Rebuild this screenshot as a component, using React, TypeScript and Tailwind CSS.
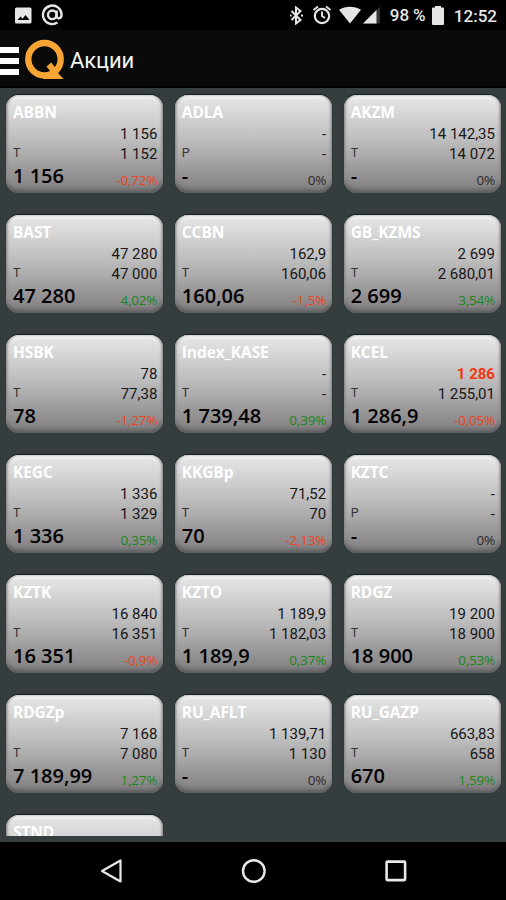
type Quote = {
  name: string;
  first: string;
  second: string;
  mode?: string;
  price: string;
  change: string;
  alert?: boolean;
};

const quotes: Quote[] = [
  { name: 'ABBN', first: '1 156', second: '1 152', price: '1 156', change: '-0,72%' },
  { name: 'ADLA', first: '-', second: '-', mode: 'P', price: '-', change: '0%' },
  { name: 'AKZM', first: '14 142,35', second: '14 072', price: '-', change: '0%' },
  { name: 'BAST', first: '47 280', second: '47 000', price: '47 280', change: '4,02%' },
  { name: 'CCBN', first: '162,9', second: '160,06', price: '160,06', change: '-1,5%' },
  { name: 'GB_KZMS', first: '2 699', second: '2 680,01', price: '2 699', change: '3,54%' },
  { name: 'HSBK', first: '78', second: '77,38', price: '78', change: '-1,27%' },
  { name: 'Index_KASE', first: '-', second: '-', price: '1 739,48', change: '0,39%' },
  { name: 'KCEL', first: '1 286', second: '1 255,01', price: '1 286,9', change: '-0,05%', alert: true },
  { name: 'KEGC', first: '1 336', second: '1 329', price: '1 336', change: '0,35%' },
  { name: 'KKGBp', first: '71,52', second: '70', price: '70', change: '-2,13%' },
  { name: 'KZTC', first: '-', second: '-', mode: 'P', price: '-', change: '0%' },
  { name: 'KZTK', first: '16 840', second: '16 351', price: '16 351', change: '-0,9%' },
  { name: 'KZTO', first: '1 189,9', second: '1 182,03', price: '1 189,9', change: '0,37%' },
  { name: 'RDGZ', first: '19 200', second: '18 900', price: '18 900', change: '0,53%' },
  { name: 'RDGZp', first: '7 168', second: '7 080', price: '7 189,99', change: '1,27%' },
  { name: 'RU_AFLT', first: '1 139,71', second: '1 130', price: '-', change: '0%' },
  { name: 'RU_GAZP', first: '663,83', second: '658', price: '670', change: '1,59%' },
];

const cardSurface =
  'h-[98px] rounded-[13px] bg-linear-to-b from-[#e8e8e8] from-0% via-[#bcbbbc] via-48% to-[#858284] to-95% px-[7px] pt-[6px] shadow-[0_-1px_1px_#171c1e,inset_0_-5px_4px_-2px_#595a5b,inset_2px_0_3px_-1px_#7d7d7d,inset_-2px_0_3px_-1px_#7d7d7d,inset_0_3px_3px_#f4f4f4]';

function changeColor(change: string) {
  if (change.startsWith('-')) return 'text-[#ee4423]';
  if (change === '0%') return 'text-[#2b2a2b]';
  return 'text-[#18881b]';
}

function Ticker({ name }: { name: string }) {
  return (
    <div className="h-[23px] font-['Open_Sans',sans-serif] text-[15.5px] leading-[22px] font-bold tracking-[-0.1px] text-white">
      {name}
    </div>
  );
}

function Card({ q }: { q: Quote }) {
  return (
    <div className={cardSurface}>
      <Ticker name={q.name} />
      <div className={`-mr-px h-5 text-right text-[15px] leading-5 ${q.alert ? 'font-bold text-[#f53510]' : 'text-[#171717]'}`}>{q.first}</div>
      <div className="-mr-px flex h-5 items-center justify-between leading-5">
        <span className="pb-[2px] text-[12.5px] leading-[18px] text-[#343434]">{q.mode ?? 'T'}</span>
        <span className="text-[15px] text-[#171717]">{q.second}</span>
      </div>
      <div className="-mr-px flex h-6 justify-between font-['Open_Sans',sans-serif] leading-6">
        <span className="text-[20px] font-semibold text-black">{q.price}</span>
        <span className={`pt-[4px] text-[13.5px] tracking-[-0.2px] ${changeColor(q.change)}`}>{q.change}</span>
      </div>
    </div>
  );
}

function StatusBar() {
  return (
    <div className="flex h-[30px] items-center bg-black pr-[9px] pl-[15px] text-[#e6e6e6]">
      <svg width="17" height="17" viewBox="0 0 17 17">
        <rect x="0" y="0.5" width="16.5" height="16" rx="1.5" fill="currentColor" />
        <path d="M2.5 13 5.5 9.5l2 2.2L10.5 8l4 5Z" fill="#000" />
      </svg>
      <svg className="ml-[9px]" width="23" height="22" viewBox="0 0 23 22" fill="none" stroke="currentColor" strokeWidth="2.4">
        <circle cx="11.3" cy="10.8" r="4.3" />
        <path d="M15.6 6.5v5.3c0 3.8 5 3.2 5-1a9.3 9.3 0 1 0-4.2 7.8" />
      </svg>
      <div className="ml-auto flex items-center">
        <svg width="13" height="19" viewBox="0 0 13 19" fill="none" stroke="currentColor" strokeWidth="2">
          <path d="m1.5 5 9 9L6 17.5v-16L10.5 5l-9 9" />
          <path d="M0 9.5h1.5M11 9.5h2" strokeWidth="2" />
        </svg>
        <svg className="ml-[9px]" width="20" height="20" viewBox="0 0 20 20" fill="none" stroke="currentColor" strokeWidth="2.2">
          <circle cx="10" cy="11" r="7.2" />
          <path d="M10 6.5V11l3 2M1.5 5 6 1.5M18.5 5 14 1.5" strokeWidth="1.9" />
        </svg>
        <svg className="ml-[7px]" width="22" height="18" viewBox="0 0 23 18" fill="currentColor">
          <path d="M0 3.5C7-.8 16-.8 23 3.5L11.5 18Z" />
        </svg>
        <svg className="ml-[2px]" width="18" height="18" viewBox="0 0 18 18">
          <path d="M0 17.5 17 .5v17Z" fill="#333" />
          <path d="M0 17.5 13.5 4v13.5Z" fill="currentColor" />
        </svg>
        <span className="ml-[9px] w-[37px] text-[17px] leading-5 font-medium whitespace-nowrap tracking-[-0.1px]">98 %</span>
        <svg className="ml-[5px]" width="12" height="19" viewBox="0 0 12 19" fill="currentColor">
          <path d="M3 0h6v1.5h2q1 0 1 1v15.5q0 1-1 1H1q-1 0-1-1V2.500q0-1 1-1h2Z" />
        </svg>
        <span className="ml-[10px] pt-px text-[17px] leading-5 font-medium">12:52</span>
      </div>
    </div>
  );
}

export default function App() {
  return (
    <div className="flex h-[900px] w-[506px] flex-col overflow-hidden bg-[#363d3f] font-[Roboto,sans-serif]">
      <StatusBar />
      <header className="flex h-[58px] items-center border-b-2 border-black bg-[#0a0a0a]">
        <div className="mt-[5px] flex w-[19px] flex-col gap-[5px]">
          <span className="h-[6px] bg-white" />
          <span className="h-[6px] bg-white" />
          <span className="h-[6px] bg-white" />
        </div>
        <svg className="mt-[4px] ml-[6px]" width="40" height="42" viewBox="0 0 40 42" fill="none">
          <circle cx="19.5" cy="20.2" r="16.2" stroke="#f9a536" strokeWidth="6.4" />
          <path d="m21.500 27.500 4.700-4 4.500 5.500 4.300 1-2.500 3.500 6.200 6.500H18v-4.500h10Z" fill="#f9a536" />
        </svg>
        <h1 className="mt-[5px] ml-[5px] text-[22px] tracking-[-0.1px] text-[#f3f3f3]">Акции</h1>
      </header>
      <main className="h-[748px] overflow-hidden pt-[7px] pr-[5px] pl-[6px]">
        <div className="grid grid-cols-3 gap-x-[11.5px] gap-y-[22px]">
          {quotes.map((q) => (
            <Card key={q.name} q={q} />
          ))}
          <div className={cardSurface}>
            <Ticker name="STND" />
          </div>
        </div>
      </main>
      <div className="h-[6px]" />
      <nav className="flex h-[58px] items-center bg-black text-[#e9e9e9]">
        <svg className="ml-[100px]" width="23" height="26" viewBox="0 0 23 26" fill="none" stroke="currentColor" strokeWidth="2.2" strokeLinejoin="round">
          <path d="M20.500 2.500v21L2 13Z" />
        </svg>
        <svg className="ml-[118px]" width="26" height="26" viewBox="0 0 26 26" fill="none" stroke="currentColor" strokeWidth="2.4">
          <circle cx="12.8" cy="13" r="10.8" />
        </svg>
        <svg className="ml-[117px]" width="24" height="24" viewBox="0 0 24 24" fill="none" stroke="currentColor" strokeWidth="2.6">
          <rect x="2.6" y="2.6" width="18.5" height="18.5" rx="1" />
        </svg>
      </nav>
    </div>
  );
}
